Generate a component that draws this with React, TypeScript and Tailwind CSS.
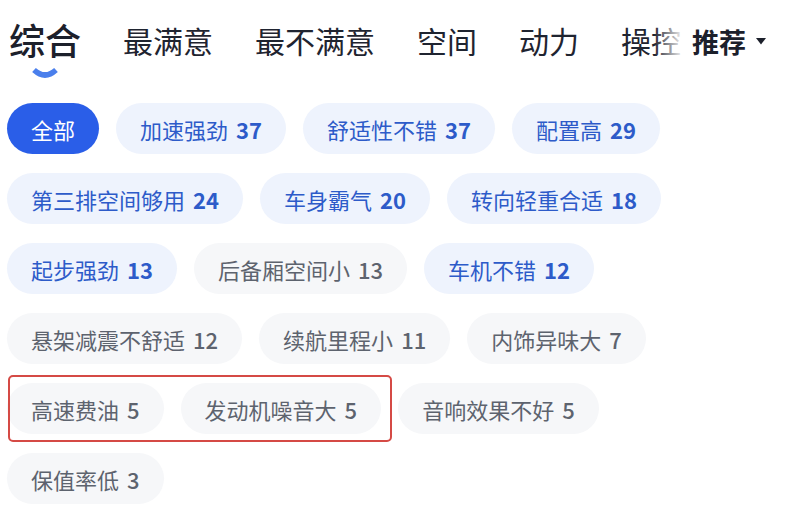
import React from "react";

type Tone = "active" | "blue" | "grey";
type Chip = { label: string; count?: number; tone: Tone };

const chips: Chip[] = [
  { label: "全部", tone: "active" },
  { label: "加速强劲", count: 37, tone: "blue" },
  { label: "舒适性不错", count: 37, tone: "blue" },
  { label: "配置高", count: 29, tone: "blue" },
  { label: "第三排空间够用", count: 24, tone: "blue" },
  { label: "车身霸气", count: 20, tone: "blue" },
  { label: "转向轻重合适", count: 18, tone: "blue" },
  { label: "起步强劲", count: 13, tone: "blue" },
  { label: "后备厢空间小", count: 13, tone: "grey" },
  { label: "车机不错", count: 12, tone: "blue" },
  { label: "悬架减震不舒适", count: 12, tone: "grey" },
  { label: "续航里程小", count: 11, tone: "grey" },
  { label: "内饰异味大", count: 7, tone: "grey" },
  { label: "高速费油", count: 5, tone: "grey" },
  { label: "发动机噪音大", count: 5, tone: "grey" },
  { label: "音响效果不好", count: 5, tone: "grey" },
  { label: "保值率低", count: 3, tone: "grey" },
];

const tabs = ["最满意", "最不满意", "空间", "动力", "操控"];

const toneClass: Record<Tone, string> = {
  active: "bg-[#2a5ee8] text-white",
  blue: "bg-[#eef3fd] text-[#2d5bc9]",
  grey: "bg-[#f6f7f9] text-[#5d636e]",
};

function ChipItem({ chip }: { chip: Chip }) {
  return (
    <div
      className={`h-[51px] px-[24px] rounded-full flex items-center text-[22px] leading-none whitespace-nowrap ${toneClass[chip.tone]}`}
    >
      <span>{chip.label}</span>
      {chip.count !== undefined && (
        <span
          className={`ml-[8px] ${chip.tone === "grey" ? "font-medium" : "font-semibold"}`}
        >
          {chip.count}
        </span>
      )}
    </div>
  );
}

export default function App() {
  return (
    <div
      className="w-[795px] h-[528px] bg-white overflow-hidden"
      style={{ fontFamily: '"Noto Sans CJK SC", "Noto Sans", sans-serif' }}
    >
      {/* 顶部标签栏 */}
      <div className="flex h-[85px] items-start">
        <div className="relative flex-1 overflow-hidden h-full">
          <div className="flex items-center gap-[42px] pl-[9px] h-[82px] pb-[2px] whitespace-nowrap">
            <div className="relative shrink-0">
              <span className="text-[36px] font-medium text-[#1c202b] leading-none">综合</span>
              <svg
                className="absolute left-[22px] top-[46px]"
                width="28"
                height="14"
                viewBox="0 0 28 14"
              >
                <path
                  d="M3 3 Q14 13 25 3"
                  fill="none"
                  stroke="#4a7fec"
                  strokeWidth="5.5"
                  strokeLinecap="butt"
                />
              </svg>
            </div>
            {tabs.map((t) => (
              <span key={t} className="shrink-0 text-[30px] text-[#1f2430] leading-none">
                {t}
              </span>
            ))}
          </div>
          <div className="absolute right-0 top-0 h-full w-[30px] bg-gradient-to-r from-transparent to-white" />
        </div>
        <div className="shrink-0 flex items-center h-[82px] pl-[8px] pr-[29px]">
          <span className="text-[27px] font-semibold text-[#1c202b] leading-none">推荐</span>
          <svg className="ml-[10px]" width="10" height="7" viewBox="0 0 10 7">
            <path d="M0 0 H10 L5 6.5 Z" fill="#1c202b" />
          </svg>
        </div>
      </div>

      {/* 标签列表 */}
      <div className="relative mt-[18px] pl-[7px] pr-[40px] flex flex-wrap gap-x-[17px] gap-y-[19px]">
        {chips.map((c) => (
          <ChipItem key={c.label} chip={c} />
        ))}
        <div className="absolute left-[8px] top-[272px] w-[384px] h-[67px] border-2 border-[#d54a45] rounded-[5px] pointer-events-none" />
      </div>
    </div>
  );
}
